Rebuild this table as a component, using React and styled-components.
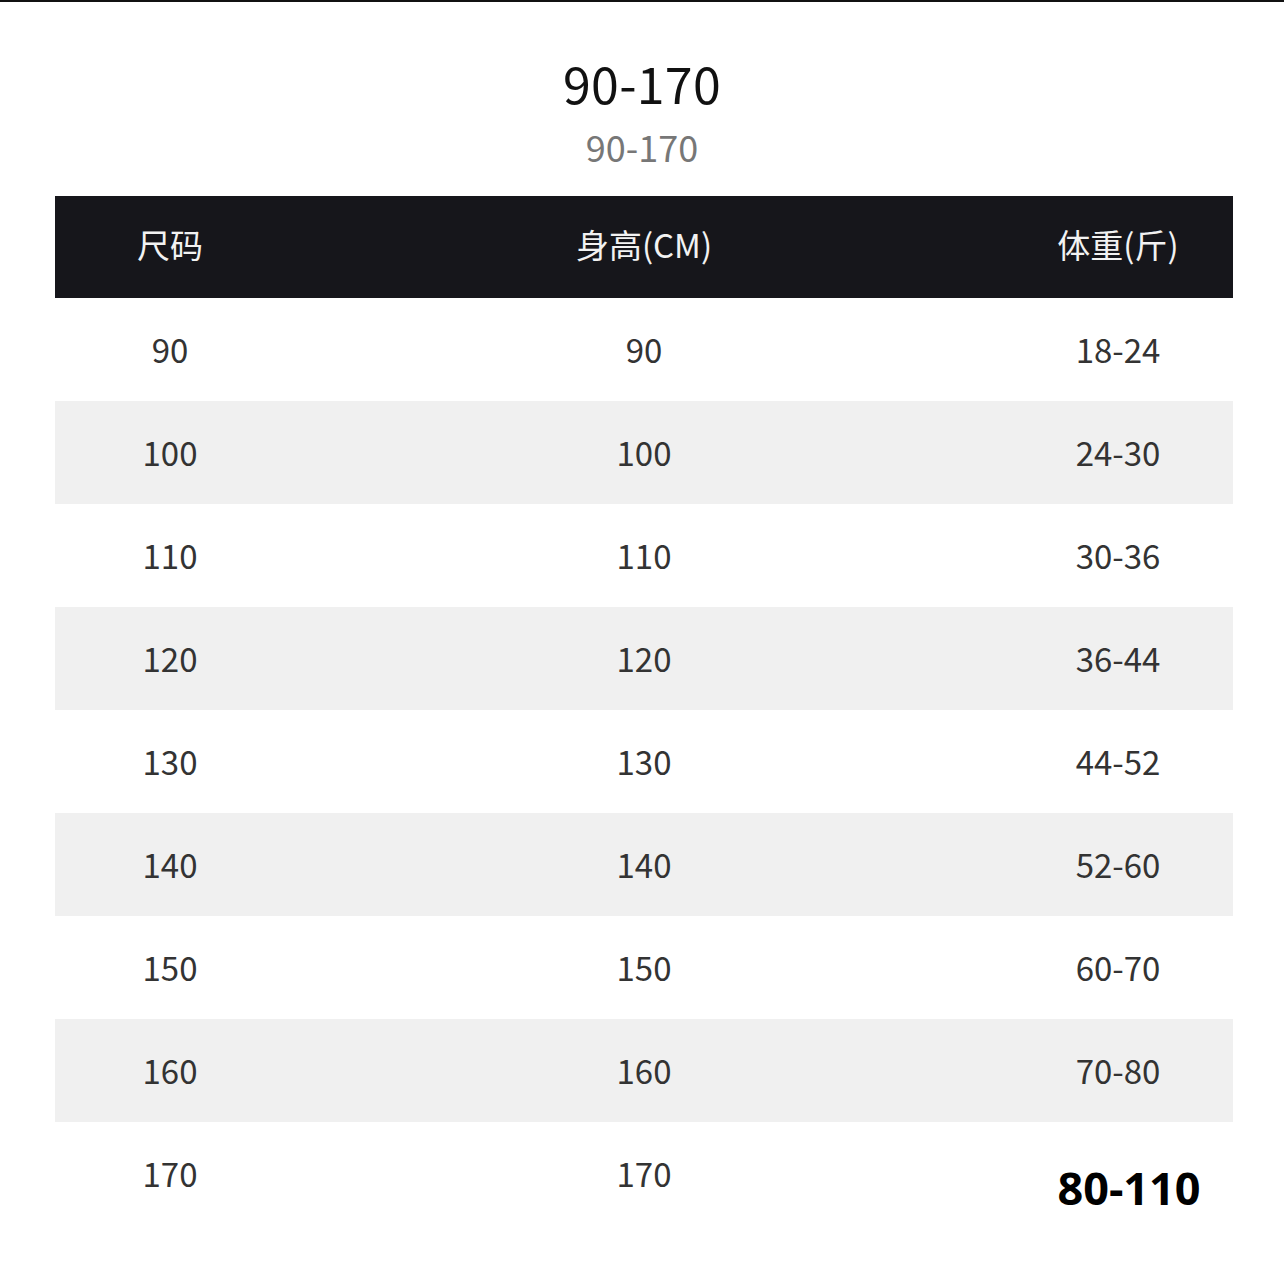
import React from "react";
import styled, { createGlobalStyle } from "styled-components";

const Global = createGlobalStyle`
  html, body { margin: 0; padding: 0; background: #fff; }
  body { font-family: "Noto Sans CJK SC", "Noto Sans", sans-serif; }
`;

const Page = styled.div`
  width: 1284px;
  height: 1277px;
  box-sizing: border-box;
  border-top: 2px solid #111;
  background: #fff;
  display: flex;
  flex-direction: column;
  align-items: center;
  padding-top: 50px;
`;

const Title = styled.div`
  font-size: 50px;
  line-height: 60px;
  height: 60px;
  color: #111;
  letter-spacing: 0.3px;
`;

const Subtitle = styled.div`
  margin-top: 14px;
  font-size: 36px;
  line-height: 40px;
  height: 40px;
  color: #777;
`;

const Table = styled.div`
  align-self: flex-start;
  margin-left: 55px;
  margin-top: 30px;
  width: 1178px;
  display: flex;
  flex-direction: column;
`;

const Row = styled.div`
  display: grid;
  grid-template-columns: 230px 1fr 230px;
  height: ${(p) => (p.$header ? 102 : 103)}px;
  background: ${(p) => (p.$header ? "#16161b" : p.$shade ? "#f0f0f0" : "#fff")};
  color: ${(p) => (p.$header ? "#f2f2f2" : "#333")};
`;

const Cell = styled.div`
  display: flex;
  align-items: center;
  justify-content: center;
  font-size: ${(p) => (p.$header ? 33 : 33)}px;
  padding-bottom: ${(p) => (p.$header ? 6 : 2)}px;
`;

const Highlight = styled.span`
  font-family: "Open Sans", "Noto Sans", sans-serif;
  font-weight: 700;
  font-size: 45px;
  color: #000;
  margin-left: 22px;
  margin-top: 30px;
`;

const rows = [
  ["90", "90", "18-24"],
  ["100", "100", "24-30"],
  ["110", "110", "30-36"],
  ["120", "120", "36-44"],
  ["130", "130", "44-52"],
  ["140", "140", "52-60"],
  ["150", "150", "60-70"],
  ["160", "160", "70-80"],
  ["170", "170", null],
];

export default function App() {
  return (
    <>
      <Global />
      <Page>
        <Title>90-170</Title>
        <Subtitle>90-170</Subtitle>
        <Table>
          <Row $header>
            <Cell $header>尺码</Cell>
            <Cell $header>身高(CM)</Cell>
            <Cell $header>体重(斤)</Cell>
          </Row>
          {rows.map((r, i) => (
            <Row key={i} $shade={i % 2 === 1}>
              <Cell>{r[0]}</Cell>
              <Cell>{r[1]}</Cell>
              <Cell>{r[2] ?? <Highlight>80-110</Highlight>}</Cell>
            </Row>
          ))}
        </Table>
      </Page>
    </>
  );
}
